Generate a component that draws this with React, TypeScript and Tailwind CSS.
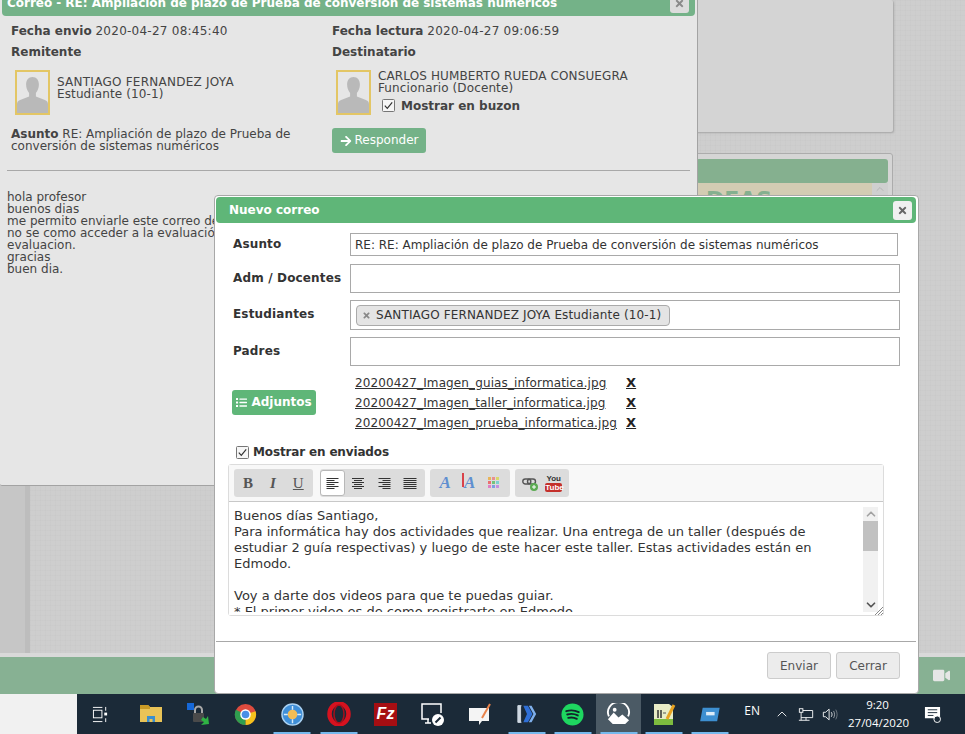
import { FaArrowRight, FaList, FaTimes, FaVideo } from "react-icons/fa";
import { ChevronUp, ChevronDown } from "lucide-react";

const CloseBtn = ({ dim }: { dim?: boolean }) => (
  <div
    className={`flex h-[19px] w-[19px] items-center justify-center rounded-[3px] text-[11px] ${
      dim ? "bg-[#dcdcdc] text-[#8a8a8a]" : "bg-[#f0f0f0] text-[#666666]"
    }`}
  >
    <FaTimes />
  </div>
);

const Avatar = () => (
  <div className="h-[45px] w-[35px] shrink-0 overflow-hidden border-2 border-[#e3c665] bg-[#e6e6e6]">
    <svg viewBox="0 0 31 41" className="h-full w-full">
      <path
        d="M15.5 5c4 0 6.4 3 6.4 7.6 0 3.400-1.300 6.500-3 8.400v3.500l9 3.500c2 .8 3.100 2 3.100 4V41H0v-9c0-2 1.100-3.200 3.100-4l9-3.500V21c-1.700-1.900-3-5-3-8.400C9.100 8 11.500 5 15.500 5z"
        fill="#b9b9b9"
      />
    </svg>
  </div>
);

const Check = () => (
  <svg viewBox="0 0 13 13" className="h-[13px] w-[13px] shrink-0">
    <rect x="0.5" y="0.5" width="12" height="12" rx="1" fill="#f6f6f6" stroke="#767676" />
    <path d="M2.800 6.600 5.300 9.400 10.200 3.400" fill="none" stroke="#333333" strokeWidth="1.200" />
  </svg>
);

const AlignIcon = ({ mode }: { mode: "left" | "center" | "right" | "full" }) => {
  const rows = [12, 8, 12, 8, 12, 8];
  return (
    <svg viewBox="0 0 14 13" className="h-[13px] w-[14px]">
      {rows.map((w, i) => {
        const width = mode === "full" ? 13 : w;
        const x = mode === "left" || mode === "full" ? 0.5 : mode === "right" ? 13.5 - width : 7 - width / 2;
        return <rect key={i} x={x} y={i * 2 + 1} width={width} height="1" fill="#333333" />;
      })}
    </svg>
  );
};

const Attachment = ({ name }: { name: string }) => (
  <div className="flex h-5 items-center text-[12px] tracking-[0.12px] text-[#333333]">
    <span className="w-[271px] underline">{name}</span>
    <span className="text-[13px] font-bold text-[#222222] underline">X</span>
  </div>
);

const Field = ({ label, h, children }: { label: string; h: string; children?: React.ReactNode }) => (
  <div className="flex items-start">
    <label className="w-[117px] shrink-0 pt-[6px] text-[12px] leading-4 font-bold tracking-[0.15px] text-[#333333]">{label}</label>
    <div className={`flex w-[550px] items-center border border-[#a9a9a9] bg-white ${h}`}>{children}</div>
  </div>
);

const TaskIcon = ({ w, active, running, children }: { w: string; active?: boolean; running?: boolean; children: React.ReactNode }) => (
  <div className={`relative flex h-10 shrink-0 items-center justify-center ${w} ${active ? "bg-[#4b5a65]" : ""}`}>
    {children}
    {running && <div className="absolute bottom-0 left-1/2 h-[2px] w-[37px] -translate-x-1/2 bg-[#76b9ed]" />}
  </div>
);

const Taskbar = () => (
  <div className="flex h-10 shrink-0">
    <div className="w-[77px] bg-[#f1f1f1]" />
    <div className="flex flex-1 items-center bg-[#1b2a38] text-white">
      <TaskIcon w="w-[46px] mr-[4px]">
        <svg viewBox="0 0 18 18" className="h-[17px] w-[17px]" fill="none" stroke="#fff" strokeWidth="1">
          <path d="M1 1.500h10M1 16.500h10" />
          <rect x="1.500" y="4.500" width="9" height="8" />
          <path d="M14.500 1v4M14.500 13v4" />
          <rect x="13" y="7" width="3" height="3" fill="#fff" stroke="none" />
        </svg>
      </TaskIcon>
      <TaskIcon w="w-[47px]">
        <svg viewBox="0 0 22 20" className="h-5 w-[22px]">
          <path d="M0 1h8l2 2h12v15H0z" fill="#e9c357" />
          <path d="M0 1h8l2 2v2H0z" fill="#c99a26" />
          <path d="M7 12h8v6h-2.500v-3h-3v3H7z" fill="#3b8fcf" />
        </svg>
      </TaskIcon>
      <TaskIcon w="w-[47px]">
        <svg viewBox="0 0 24 24" className="h-6 w-6">
          <rect x="1" y="1" width="7" height="7" fill="#1668d8" />
          <rect x="7" y="11" width="11" height="9" rx="1" fill="#4a4a4a" />
          <path d="M9 11V8a3.500 3.500 0 0 1 7 0v3" fill="none" stroke="#a8a8a8" strokeWidth="2" />
          <path d="M15 23l8-1-1-8-2 3-3-2-2 3 3 2z" fill="#2fb344" />
        </svg>
      </TaskIcon>
      <TaskIcon w="w-[48px]">
        <svg viewBox="0 0 24 24" className="h-[23px] w-[23px]">
          <circle cx="12" cy="12" r="11" fill="#dd4b3e" />
          <path d="M12 12 22.500 8.500A11 11 0 0 1 12 23z" fill="#f6c21c" />
          <path d="M12 12 12 23A11 11 0 0 1 2 7z" fill="#2f9e4f" />
          <circle cx="12" cy="12" r="5.500" fill="#fff" />
          <circle cx="12" cy="12" r="4" fill="#4a8fe7" />
        </svg>
      </TaskIcon>
      <TaskIcon w="w-[46px]" running>
        <svg viewBox="0 0 24 24" className="h-[23px] w-[23px]">
          <circle cx="12" cy="12" r="11" fill="#3f8fd8" stroke="#a9d1f2" strokeWidth="1.500" />
          <circle cx="12" cy="12" r="5" fill="#f2bd55" />
          <path d="M12 3v4M12 17v4M3 12h4M17 12h4" stroke="#d8ecfb" strokeWidth="1.500" />
        </svg>
      </TaskIcon>
      <TaskIcon w="w-[48px]" running>
        <svg viewBox="0 0 24 24" className="h-6 w-6">
          <ellipse cx="12" cy="12" rx="9.500" ry="10.500" fill="none" stroke="#d6121f" strokeWidth="4.500" />
          <ellipse cx="12" cy="12" rx="5" ry="9" fill="none" stroke="#a80f1a" strokeWidth="1.500" />
        </svg>
      </TaskIcon>
      <TaskIcon w="w-[45px]">
        <div className="flex h-[23px] w-[23px] items-center justify-center bg-[#a60e12] font-['Liberation_Sans',sans-serif] text-[16px] leading-none font-bold text-white italic">
          Fz
        </div>
      </TaskIcon>
      <TaskIcon w="w-[48px]">
        <svg viewBox="0 0 24 24" className="h-6 w-6" fill="none" stroke="#fff" strokeWidth="1.500">
          <path d="M9 17H2V2h19v9" />
          <path d="M5 21h6M8 17v4" />
          <circle cx="18" cy="18" r="6" fill="#fff" stroke="none" />
          <path d="M15.500 20.500l5-5" stroke="#1b2a38" strokeWidth="2" />
        </svg>
      </TaskIcon>
      <TaskIcon w="w-[48px]">
        <svg viewBox="0 0 24 24" className="h-6 w-6">
          <path d="M1 6h20v13H14l-3 4v-4H1z" fill="#f4f4f4" />
          <path d="M14 16 22 2" stroke="#e8824a" strokeWidth="2" />
        </svg>
      </TaskIcon>
      <TaskIcon w="w-[46px]" running>
        <svg viewBox="0 0 24 24" className="h-[22px] w-6">
          <path d="M2 3h3v18H2zM2 3h4M2 21h4" fill="#cfd8e2" stroke="#cfd8e2" />
          <path d="M8 3h5l5 9-5 9H8l4-9z" fill="#2f6fd6" />
          <path d="M14 3h3l5 9-5 9h-3l5-9z" fill="#7fb0ec" />
        </svg>
      </TaskIcon>
      <TaskIcon w="w-[45px]" running>
        <svg viewBox="0 0 24 24" className="h-[23px] w-[23px]">
          <circle cx="12" cy="12" r="11.500" fill="#1ed760" />
          <path d="M5.500 8.500c4-1.200 9-1 13 1M6.500 12c3.500-1 7.500-.8 11 1M7.500 15.500c3-.8 6-.6 9 1" fill="none" stroke="#14212c" strokeWidth="2" strokeLinecap="round" />
        </svg>
      </TaskIcon>
      <TaskIcon w="w-[45px] ml-[1px]" active running>
        <svg viewBox="0 0 26 24" className="h-[23px] w-[25px]">
          <path d="M3 14A11 10.500 0 1 1 23 14" fill="none" stroke="#fff" strokeWidth="2" />
          <path d="M2 17l6-7 5 5 4-3 7 6-4 4H7z" fill="#fff" />
          <circle cx="9" cy="7" r="2" fill="#fff" />
        </svg>
      </TaskIcon>
      <TaskIcon w="w-[45px]" running>
        <svg viewBox="0 0 24 24" className="h-6 w-6">
          <path d="M2 2h15l4 3v18H2z" fill="#e8ecc6" />
          <path d="M2 17h19v6H2z" fill="#7dbb3f" />
          <path d="M6 8v8M9 8v8" stroke="#333" strokeWidth="1.500" />
          <path d="M11 11h3" stroke="#555" />
          <path d="M15 17l7-14" stroke="#e8a320" strokeWidth="3" />
        </svg>
      </TaskIcon>
      <TaskIcon w="w-[47px]" running>
        <svg viewBox="0 0 26 20" className="h-[17px] w-[23px]">
          <path d="M5 2h20l-3 16H2z" fill="#3d8fd1" />
          <rect x="9" y="7" width="10" height="4" fill="#dcecf8" />
        </svg>
      </TaskIcon>
      <div className="flex-1" />
      <span className="mr-[14px] mb-[6px] font-['Open_Sans',sans-serif] text-[12px]">EN</span>
      <ChevronUp className="mr-[8px] h-4 w-4" strokeWidth={1.300} />
      <svg viewBox="0 0 18 16" className="mr-[8px] h-[15px] w-4" fill="none" stroke="#fff">
        <rect x="1.500" y="1.500" width="4" height="4" />
        <path d="M5.500 3.500h11v8h-13M3.500 5.500v9M1 14.500h12M9 11.500v3" />
      </svg>
      <svg viewBox="0 0 18 16" className="mr-[10px] h-[15px] w-4" fill="none" stroke="#fff">
        <path d="M1.500 5.500h2.500l4-3.500v12l-4-3.500H1.500z" />
        <path d="M10.500 5.500c1 1.500 1 3.500 0 5" />
        <path d="M13 4c1.500 2.500 1.500 5.500 0 8" opacity="0.600" />
        <path d="M15.500 2.500c2 3.500 2 7.500 0 11" opacity="0.400" />
      </svg>
      <div className="w-[59px] text-center font-['Open_Sans',sans-serif] text-[11.500px] leading-[18px] whitespace-nowrap">
        <div>9:20</div>
        <div>27/04/2020</div>
      </div>
      <div className="flex w-[58px] justify-center pr-[8px]">
        <svg viewBox="0 0 18 18" className="h-[17px] w-[17px]">
          <path d="M1 1h16v12h-4v3l-3-3H1z" fill="#fff" />
          <path d="M4 4h10M4 7h10M4 10h6" stroke="#1b2a38" />
          <circle cx="14" cy="14" r="3.500" fill="#1b2a38" stroke="#fff" />
        </svg>
      </div>
    </div>
  </div>
);

const MailWindow = () => (
  <div className="absolute top-[-10px] left-0 h-[496px] w-[698px] rounded-b-[2px] border-r border-b border-[#a3a3a3] bg-[#e6e6e6] p-[2px] pt-0 font-['DejaVu_Sans',sans-serif] text-[12px] text-[#444444]">
    <div className="flex h-[26px] items-center justify-between rounded-b-[4px] bg-[#74b288] pr-[6px] pl-[5px] text-[12px] font-bold tracking-[-0.03px] text-white">
      <span>Correo - RE: Ampliación de plazo de Prueba de conversión de sistemas numéricos</span>
      <CloseBtn dim />
    </div>
    <div className="grid grid-cols-[321px_1fr] pt-[8px] pl-[9px] leading-[13px]">
      <div>
        <div className="pt-[1px]">
          <b>Fecha envio</b> <span className="tracking-[0.25px]">2020-04-27 08:45:40</span>
        </div>
        <div className="mt-[8px] font-bold">Remitente</div>
        <div className="mt-[11px] flex h-[45px] gap-[7px] pl-[4px]">
          <Avatar />
          <div className="pt-[6px] leading-3">
            <div className="tracking-[0.25px]">SANTIAGO FERNANDEZ JOYA</div>
            <div className="tracking-[0.12px]">Estudiante (10-1)</div>
          </div>
        </div>
        <div className="mt-[13px] w-[300px] leading-3">
          <b>Asunto</b> RE: Ampliación de plazo de Prueba de conversión de sistemas numéricos
        </div>
      </div>
      <div>
        <div className="pt-[1px]">
          <b>Fecha lectura</b> <span className="tracking-[0.25px]">2020-04-27 09:06:59</span>
        </div>
        <div className="mt-[8px] font-bold">Destinatario</div>
        <div className="mt-[11px] flex h-[45px] gap-[7px] pl-[4px]">
          <Avatar />
          <div className="leading-3 tracking-[0.12px]">
            <div>CARLOS HUMBERTO RUEDA CONSUEGRA</div>
            <div>Funcionario (Docente)</div>
            <div className="mt-[5px] flex items-center gap-[6px] pl-[4px] font-bold tracking-normal">
              <Check />
              <span>Mostrar en buzon</span>
            </div>
          </div>
        </div>
        <div className="mt-[13px] flex h-[25px] w-[94px] items-center justify-center gap-[3px] rounded-[3px] bg-[#74b288] text-white">
          <FaArrowRight className="h-3 w-3" />
          <span>Responder</span>
        </div>
      </div>
    </div>
    <div className="mx-[5px] mt-[17px] border-t border-[#a8a8a8]" />
    <div className="mt-[20px] pl-[5px] leading-3">
      <div>hola profesor</div>
      <div>buenos dias</div>
      <div>me permito enviarle este correo de</div>
      <div>no se como acceder a la evaluación</div>
      <div>evaluacion.</div>
      <div>gracias</div>
      <div>buen dia.</div>
    </div>
  </div>
);

const Backdrop = () => (
  <div className="relative flex-1 overflow-hidden bg-[#cecece] bg-[linear-gradient(#c8c8c855_1px,transparent_1px),linear-gradient(90deg,#c8c8c855_1px,transparent_1px)] bg-[size:5px_5px]">
    <div className="absolute top-[486px] left-0 h-[167px] w-[25px] bg-[#c6c6c6]" />
    <div className="absolute top-[486px] left-[25px] h-[167px] w-[5px] bg-[#bdbdbd]" />
    <div className="absolute top-0 left-[690px] h-[132px] w-[203px] rounded-[2px] bg-[#d4d4d4] shadow-[1px_1px_2px_#a5a5a5]" />
    <div className="absolute top-[153px] left-[690px] h-[60px] w-[203px] rounded-[3px] border border-[#acacac] bg-[#d5d5d5] p-[5px] pr-[4px]">
      <div className="h-6 rounded-[3px] bg-[#85b08f]" />
      <div className="flex h-[40px]">
        <div className="flex-1 overflow-hidden bg-[#d3ccb3] pt-[5px] pl-[10px] font-['DejaVu_Sans',sans-serif] text-[22px] leading-6 font-bold text-[#85b08f]">
          DEAS
        </div>
        <div className="flex w-[16px] justify-center bg-[#cfcfcf] text-[#b5b5b5]">
          <ChevronUp className="h-[12px] w-[12px]" />
        </div>
      </div>
    </div>
    <MailWindow />
    <div className="absolute right-0 bottom-0 left-0 h-[4px] bg-[#d9d9d9]" />
  </div>
);

const NewMail = () => (
  <div className="absolute top-[195px] left-[214px] flex h-[499px] w-[705px] flex-col rounded-[4px] border border-[#a8a8a8] bg-white pt-px pr-[2px] pl-px font-['DejaVu_Sans',sans-serif] text-[#333333]">
    <div className="flex h-[26px] shrink-0 items-center justify-between rounded-[4px] bg-[#5fb678] pr-[4px] pl-[13px]">
      <span className="text-[12px] font-bold text-white">Nuevo correo</span>
      <CloseBtn />
    </div>
    <div className="flex flex-col pl-[17px]">
      <div className="mt-[10px] flex items-start">
        <label className="w-[117px] shrink-0 pt-[3px] text-[12px] leading-4 font-bold tracking-[0.15px]">Asunto</label>
        <div className="flex h-[23px] w-[548px] items-center border border-[#a9a9a9] px-[4px] text-[12px] whitespace-nowrap">
          RE: RE: Ampliación de plazo de Prueba de conversión de sistemas numéricos
        </div>
      </div>
      <div className="mt-[8px]">
        <Field label="Adm / Docentes" h="h-[29px]" />
      </div>
      <div className="mt-[7px]">
        <Field label="Estudiantes" h="h-[30px]">
          <div className="ml-[5px] flex h-[21px] items-center gap-[5px] rounded-[4px] border border-[#aaaaaa] bg-[#e4e4e4] pr-[8px] pl-[5px] text-[12px] tracking-[0.14px]">
            <FaTimes className="h-[9px] w-[9px] text-[#888888]" />
            <span>SANTIAGO FERNANDEZ JOYA Estudiante (10-1)</span>
          </div>
        </Field>
      </div>
      <div className="mt-[7px]">
        <Field label="Padres" h="h-[29px]" />
      </div>
      <div className="mt-[5px] flex items-center">
        <div className="-ml-px flex h-[25px] w-[84px] shrink-0 items-center justify-center gap-[4px] rounded-[3px] bg-[#5fb678] text-[12px] font-bold text-white">
          <FaList className="h-[11px] w-[11px]" />
          <span>Adjuntos</span>
        </div>
        <div className="ml-[39px] flex flex-col pt-[2px]">
          <Attachment name="20200427_Imagen_guias_informatica.jpg" />
          <Attachment name="20200427_Imagen_taller_informatica.jpg" />
          <Attachment name="20200427_Imagen_prueba_informatica.jpg" />
        </div>
      </div>
      <div className="mt-[11px] flex items-center gap-[4px] pl-[3px] text-[12px] leading-4 font-bold tracking-[-0.15px]">
        <Check />
        <span>Mostrar en enviados</span>
      </div>
    </div>
    <div className="mt-[4px] ml-[12px] flex w-[656px] flex-col rounded-[3px] border border-[#dcdcdc]">
      <div className="flex h-[37px] items-center gap-[5px] border-b border-[#c8c8c8] bg-[#f8f8f8] pl-[5px]">
        <div className="mr-[2px] flex h-[28px] w-[79px] items-center gap-[17px] rounded-[3px] bg-[#dcdcdc] pl-[9px] font-['Liberation_Serif',serif] text-[15px] text-[#555555]">
          <b>B</b>
          <b className="italic">I</b>
          <span className="underline">U</span>
        </div>
        <div className="flex h-[28px] w-[105px] items-center rounded-[3px] bg-[#dcdcdc]">
          <div className="flex h-[26px] w-[25px] items-center justify-center rounded-[3px] border border-[#b8b8b8] bg-white">
            <AlignIcon mode="left" />
          </div>
          <div className="flex w-[26px] justify-center">
            <AlignIcon mode="center" />
          </div>
          <div className="flex w-[26px] justify-center">
            <AlignIcon mode="right" />
          </div>
          <div className="flex w-[26px] justify-center">
            <AlignIcon mode="full" />
          </div>
        </div>
        <div className="flex h-[28px] w-[80px] items-center justify-around rounded-[3px] bg-[#dcdcdc] px-[3px] font-['Liberation_Serif',serif] text-[17px] font-bold text-[#5f8fd0] italic">
          <span>A</span>
          <span className="relative">
            <span className="absolute top-[3px] left-[-2px] h-[14px] w-[2px] bg-[#d9424a]" />A
          </span>
          <svg viewBox="0 0 12 12" className="h-3 w-3">
            <rect x="0" y="0" width="3" height="3" fill="#e8b45a" />
            <rect x="4" y="0" width="3" height="3" fill="#e98f8f" />
            <rect x="8" y="0" width="3" height="3" fill="#d8d86a" />
            <rect x="0" y="4" width="3" height="3" fill="#ec6f6f" />
            <rect x="4" y="4" width="3" height="3" fill="#72c47b" />
            <rect x="8" y="4" width="3" height="3" fill="#7dd0d0" />
            <rect x="0" y="8" width="3" height="3" fill="#e07fc4" />
            <rect x="4" y="8" width="3" height="3" fill="#7f9de0" />
            <rect x="8" y="8" width="3" height="3" fill="#c58fe0" />
          </svg>
        </div>
        <div className="flex h-[28px] w-[54px] items-center justify-around rounded-[3px] bg-[#dcdcdc] px-[3px]">
          <svg viewBox="0 0 16 16" className="h-4 w-4">
            <rect x="0.800" y="4" width="8" height="5" rx="2.500" fill="none" stroke="#555555" strokeWidth="1.400" />
            <rect x="5.500" y="4" width="8" height="5" rx="2.500" fill="none" stroke="#555555" strokeWidth="1.400" />
            <circle cx="12" cy="12" r="4" fill="#5cab52" />
            <path d="M12 10v4M10 12h4" stroke="#fff" />
          </svg>
          <div className="flex w-[17px] flex-col items-center font-['Liberation_Sans',sans-serif] text-[8px] leading-[9px] font-bold">
            <span className="text-[#333333]">You</span>
            <span className="w-full rounded-[2px] bg-[#c4302b] text-center text-white">Tube</span>
          </div>
        </div>
      </div>
      <div className="relative h-[113px] bg-white pb-[3px]">
        <div className="h-full overflow-hidden pt-[6px] pr-[39px] pl-[5px] text-[13px] leading-4 text-[#333333]">
          <div>Buenos días Santiago,</div>
          <div>
            Para informática hay dos actividades que realizar. Una entrega de un taller (después de estudiar 2 guía
            respectivas) y luego de este hacer este taller. Estas actividades están en Edmodo.
          </div>
          <div className="h-4" />
          <div>Voy a darte dos videos para que te puedas guiar.</div>
          <div>* El primer video es de como registrarte en Edmodo</div>
        </div>
        <div className="absolute top-[5px] right-[5px] flex h-[105px] w-[15px] flex-col items-center bg-[#f1f1f1] text-[#555555]">
          <ChevronUp className="h-[14px] w-[14px] text-[#a3a3a3]" strokeWidth={3} />
          <div className="h-[30px] w-full bg-[#c1c1c1]" />
          <div className="flex-1" />
          <ChevronDown className="h-[14px] w-[14px]" strokeWidth={3} />
        </div>
        <svg viewBox="0 0 8 8" className="absolute right-0 bottom-0 h-2 w-2" stroke="#888888">
          <path d="M0 8 8 0M3 8l5-5M6 8l2-2" />
        </svg>
      </div>
    </div>
    <div className="mt-[25px] border-t border-[#a8a8a8]" />
    <div className="mt-[10px] flex justify-end gap-[5px] pr-[16px]">
      <button className="h-[27px] w-[64px] rounded-[3px] border border-[#cccccc] bg-[#ececec] text-[12px] text-[#555555]">Enviar</button>
      <button className="h-[27px] w-[64px] rounded-[3px] border border-[#cccccc] bg-[#ececec] text-[12px] text-[#555555]">Cerrar</button>
    </div>
  </div>
);

export default function App() {
  return (
    <div className="relative flex h-[734px] w-[965px] flex-col overflow-hidden">
      <Backdrop />
      <div className="flex h-[37px] shrink-0 items-center justify-end bg-[#87b193] pr-[15px] text-[#e6e6e6]">
        <FaVideo className="h-[17px] w-[17px]" />
      </div>
      <Taskbar />
      <NewMail />
    </div>
  );
}
